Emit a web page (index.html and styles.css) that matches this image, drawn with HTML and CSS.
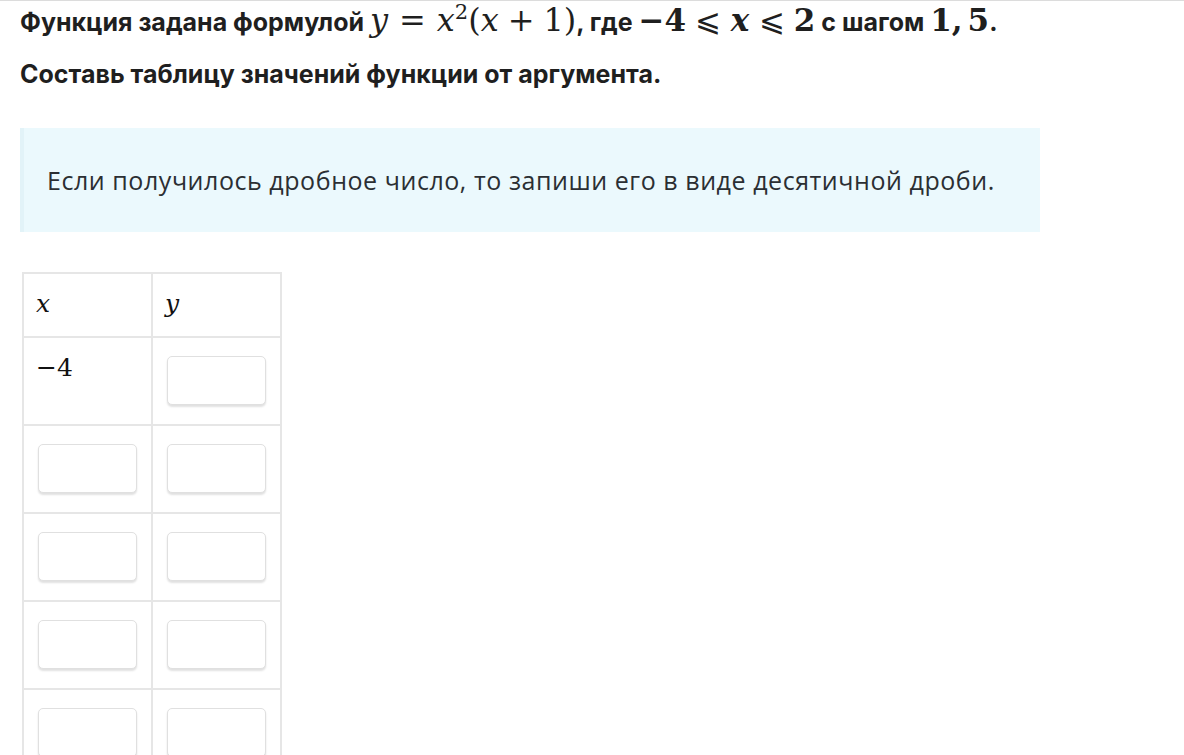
FILE: index.html
```html
<!DOCTYPE html>
<html lang="ru">
<head>
<meta charset="utf-8">
<title>Таблица значений функции</title>
<link rel="stylesheet" href="styles.css">
</head>
<body>
<div class="page">
  <p class="task">Функция задана формулой <span class="math big"><i>y</i><span class="rel">=</span><i>x</i><sup>2</sup>(<i>x</i><span class="bin">+</span>1)</span>, где <span class="math bold">−4<span class="rel">⩽</span><i>x</i><span class="rel">⩽</span>2</span> с шагом <span class="math bold">1,<span class="sp"></span>5</span>.</p>
  <p class="task">Составь таблицу значений функции от аргумента.</p>
  <div class="note">Если получилось дробное число, то запиши его в виде десятичной дроби.</div>
  <table class="values">
    <tr class="head"><td><span class="math"><i>x</i></span></td><td><span class="math"><i>y</i></span></td></tr>
    <tr><td><span class="math num">−4</span></td><td><input class="field" type="text"></td></tr>
    <tr><td><input class="field" type="text"></td><td><input class="field" type="text"></td></tr>
    <tr><td><input class="field" type="text"></td><td><input class="field" type="text"></td></tr>
    <tr><td><input class="field" type="text"></td><td><input class="field" type="text"></td></tr>
    <tr><td><input class="field" type="text"></td><td><input class="field" type="text"></td></tr>
  </table>
</div>
</body>
</html>
```

FILE: styles.css
```css
html, body {
  margin: 0;
  padding: 0;
  background: #fff;
  overflow: hidden;
}
body {
  border-top: 1px solid #dcdcdc;
}
.page {
  padding: 0 0 0 20px;
  font-family: Inter, "Liberation Sans", sans-serif;
  color: #222;
}
.task {
  margin: 0;
  font-size: 25px;
  font-weight: 700;
  line-height: 38px;
  height: 38px;
  color: #1f1f1f;
  letter-spacing: 0;
}
.task + .task {
  margin-top: 16px;
}
.math {
  font-family: "DejaVu Serif", "Liberation Serif", serif;
  font-weight: 400;
  font-size: 31px;
  line-height: 1;
  letter-spacing: 0;
  white-space: nowrap;
}
.math.big {
  font-size: 32px;
}
.math.bold {
  font-weight: 700;
}
.math i {
  font-style: italic;
}
.math sup {
  font-size: 0.66em;
  vertical-align: 0.55em;
  line-height: 1;
}
.rel, .bin {
  font-weight: 400;
}
.rel {
  padding: 0 0.3em;
}
.big .rel {
  padding: 0 0.34em;
}
.bin {
  padding: 0 0.28em;
}
.sp {
  display: inline-block;
  width: 0.16em;
}
.note {
  margin-top: 35px;
  width: 1020px;
  height: 104px;
  box-sizing: border-box;
  display: flex;
  align-items: center;
  padding-left: 23px;
  background: #ebf9fd;
  border-left: 4px solid #e2f3f8;
  font-family: "Open Sans", "Noto Sans", sans-serif;
  font-size: 25px;
  letter-spacing: 0.55px;
  color: #2b2f33;
}
.values {
  margin-top: 40px;
  margin-left: 2px;
  border-collapse: collapse;
}
.values td {
  border: 2px solid #e6e6e6;
  width: 99px;
  height: 49px;
  padding: 18px 14px 19px 14px;
  vertical-align: top;
}
.values tr.head td {
  height: 28px;
  padding: 16px 14px 18px 12px;
  vertical-align: middle;
}
.values .math {
  font-size: 25px;
  line-height: 28px;
  color: #111;
}
.values .num {
  display: block;
  margin-left: -2px;
  line-height: 24px;
}
.field {
  display: block;
  box-sizing: border-box;
  width: 99px;
  height: 49px;
  margin: 0;
  border: 1px solid #e0e0e0;
  border-radius: 5px;
  box-shadow: 0 2px 2px rgba(0, 0, 0, 0.12);
  background: #fff;
}
```
